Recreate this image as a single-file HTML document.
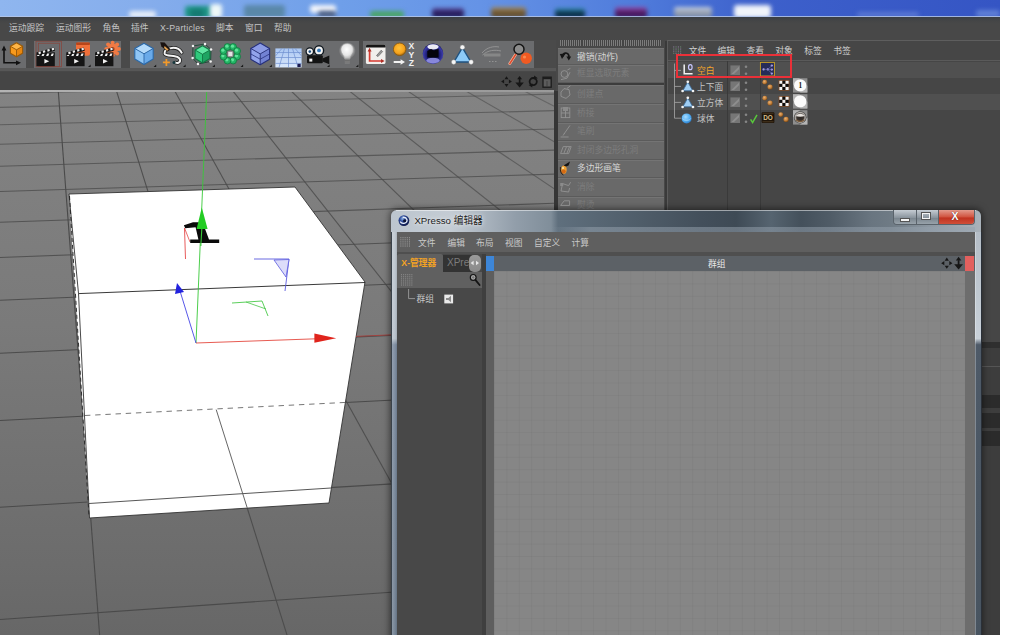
<!DOCTYPE html>
<html lang="zh"><head><meta charset="utf-8"><title>XPresso</title>
<style>
html,body{margin:0;padding:0;}
body{width:1009px;height:635px;overflow:hidden;background:#454545;position:relative;font-family:"Liberation Sans","Noto Sans CJK SC",sans-serif;font-size:8.75px;color:#c4c4c4;}
.a{position:absolute;}
.t{position:absolute;white-space:nowrap;line-height:12px;}
#top{left:0;top:0;width:1000px;height:17px;background:linear-gradient(90deg,#8fb6ef 0,#85adec 150px,#6f9fe9 340px,#6593e6 480px,#4f7bdb 640px,#3d60cb 760px,#3555c4 1000px);overflow:hidden;}
#top i{position:absolute;display:block;border-radius:3px;filter:blur(2.2px);}
#menubar{left:0;top:17px;width:1000px;height:24px;background:linear-gradient(#3a3e44 0,#454647 4px,#484848 7px);}
#white{left:1000px;top:0;width:9px;height:635px;background:#fff;}
#toolbar{left:0;top:40px;width:558px;height:30px;background:#4a4a4a;}
.bg{position:absolute;top:0.5px;height:27.5px;background:#6b6c6e;}
#strip{left:0;top:68px;width:558px;height:23px;background:linear-gradient(#575757 0,#575757 3px,#454545 3.6px);}
#vp{left:0;top:91px;width:554px;height:544px;overflow:hidden;background:linear-gradient(#838383 0,#7a7a7a 43%,#6c6c6c 87%,#676767 100%);}
</style></head><body>

<div id="top" class="a">
<i style="left:129px;top:11px;width:27px;height:7px;background:#e4ecf8"></i>
<i style="left:185px;top:6px;width:27px;height:12px;background:#1f9688"></i>
<i style="left:190px;top:9px;width:14px;height:9px;background:#157a72"></i>
<i style="left:210px;top:4px;width:12px;height:14px;background:#eef8f8"></i>
<i style="left:244px;top:5px;width:41px;height:13px;background:#5a88aa"></i>
<i style="left:310px;top:5px;width:26px;height:8px;background:#f4f6fb"></i>
<i style="left:318px;top:11px;width:18px;height:6px;background:#4a5c80"></i>
<i style="left:370px;top:11px;width:34px;height:7px;background:#4aa468"></i>
<i style="left:432px;top:8px;width:32px;height:10px;background:linear-gradient(#5a4a9a 0,#231a5a 55%)"></i>
<i style="left:491px;top:7px;width:35px;height:11px;background:linear-gradient(#a8916a 0,#66502f 55%)"></i>
<i style="left:555px;top:8px;width:30px;height:10px;background:linear-gradient(#3a94bc 0,#082c44 55%)"></i>
<i style="left:615px;top:7px;width:32px;height:11px;background:linear-gradient(#9a54b4 0,#45165c 55%)"></i>
<i style="left:674px;top:7px;width:38px;height:11px;background:linear-gradient(#d4dce8 0,#8a96aa 55%)"></i>
<i style="left:734px;top:5px;width:37px;height:13px;background:#f0f4fa"></i>
<i style="left:857px;top:12px;width:62px;height:5px;background:#5a78d4"></i>
<i style="left:976px;top:10px;width:24px;height:7px;background:#5f7fd6"></i>
</div><div class="a" style="left:0;top:15.5px;width:1000px;height:1.5px;background:#b4c6e6;opacity:.85"></div>
<div id="menubar" class="a"></div>
<div class="t" style="left:9px;top:21.5px;">运动跟踪</div>
<div class="t" style="left:56px;top:21.5px;">运动图形</div>
<div class="t" style="left:102.5px;top:21.5px;">角色</div>
<div class="t" style="left:131px;top:21.5px;">插件</div>
<div class="t" style="left:160px;top:21.5px;letter-spacing:0.24px;">X-Particles</div>
<div class="t" style="left:216px;top:21.5px;">脚本</div>
<div class="t" style="left:245px;top:21.5px;">窗口</div>
<div class="t" style="left:274px;top:21.5px;">帮助</div>
<div id="toolbar" class="a">
<div class="bg" style="left:0px;width:25.5px"></div>
<div class="bg" style="left:34px;width:86.5px"></div>
<div class="bg" style="left:129.5px;width:229.5px"></div>
<div class="bg" style="left:362.5px;width:171.5px"></div>
</div><div id="strip" class="a"></div>

<div id="vp" class="a"><svg width="560" height="544" style="position:absolute;left:0;top:0" stroke="#4a4a4a" stroke-width="1.1" fill="none">
<line x1="0" y1="2.5" x2="560" y2="-10.2" stroke-opacity="0.55"/>
<line x1="0" y1="16.4" x2="560" y2="3.0" stroke-opacity="0.60"/>
<line x1="0" y1="33.8" x2="560" y2="19.5" stroke-opacity="0.64"/>
<line x1="0" y1="53.2" x2="560" y2="37.9" stroke-opacity="0.69"/>
<line x1="0" y1="75.3" x2="560" y2="58.9" stroke-opacity="0.73"/>
<line x1="0" y1="100.5" x2="560" y2="82.9" stroke-opacity="0.78"/>
<line x1="0" y1="131.3" x2="560" y2="112.1" stroke-opacity="0.82"/>
<line x1="0" y1="166.5" x2="560" y2="145.6" stroke-opacity="0.86"/>
<line x1="0" y1="209.3" x2="560" y2="186.2" stroke-opacity="0.91"/>
<line x1="0" y1="262.3" x2="560" y2="236.6" stroke-opacity="0.96"/>
<line x1="0" y1="329.5" x2="560" y2="300.4" stroke-opacity="1.00"/>
<line x1="0" y1="416.3" x2="560" y2="382.9" stroke-opacity="1.00"/>
<line x1="0" y1="528.5" x2="560" y2="489.5" stroke-opacity="1.00"/>
<line x1="58.3" y1="0.3" x2="100.0" y2="549.0" stroke-opacity="1.00"/>
<line x1="116.6" y1="0.3" x2="288.6" y2="549.0" stroke-opacity="0.94"/>
<line x1="174.9" y1="0.3" x2="478.3" y2="549.0" stroke-opacity="0.88"/>
<line x1="233.2" y1="0.3" x2="666.7" y2="549.0" stroke-opacity="0.82"/>
<line x1="291.5" y1="0.3" x2="856.7" y2="549.0" stroke-opacity="0.76"/>
<line x1="349.8" y1="0.3" x2="1043.9" y2="549.0" stroke-opacity="0.70"/>
<line x1="408.1" y1="0.3" x2="1231.2" y2="549.0" stroke-opacity="0.64"/>
<line x1="466.4" y1="0.3" x2="1421.1" y2="549.0" stroke-opacity="0.58"/>
<line x1="524.7" y1="0.3" x2="1611.1" y2="549.0" stroke-opacity="0.52"/>
<line x1="583.0" y1="0.3" x2="1801.1" y2="549.0" stroke-opacity="0.50"/>
</svg></div>
<div class="a" style="left:0;top:90.4px;width:554px;height:2px;background:linear-gradient(90deg,#b4b4b4,#a2a2a2 40%,#9a9a9a)"></div>
<svg class="a" style="left:0;top:91px" width="554" height="544" viewBox="0 91 554 544">
<polygon points="69,194 295,187 365,282 329,503 89.5,518" fill="#ffffff"/>
<g stroke="#222" stroke-width="0.9" fill="none">
<polyline points="69,194 295,187 365,282 329,503 89.5,518 78.5,293.5 69,194" stroke="#333"/>
<line x1="78.5" y1="293.6" x2="365" y2="282.5"/>
<line x1="85" y1="415.5" x2="346" y2="402.4" stroke-dasharray="5.4,4.8" stroke="#666"/>
<line x1="89" y1="503.5" x2="331" y2="488" stroke="#444"/>
<line x1="69.5" y1="196" x2="89" y2="516" stroke-dasharray="4,3"/>
<line x1="216.2" y1="409.6" x2="247.2" y2="507.8" stroke="#555"/>
</g>
<line x1="206.7" y1="92" x2="196" y2="343" stroke="#38c838" stroke-width="0.9"/>
<line x1="196" y1="343" x2="316" y2="338.8" stroke="#e4483e" stroke-width="0.9"/>
<polygon points="336.2,338.2 314.4,333.6 314.4,342.8" fill="#e0241c"/>
<line x1="356" y1="336.4" x2="392" y2="334.8" stroke="#a8403c" stroke-width="0.9"/>
<line x1="196" y1="343" x2="180" y2="291" stroke="#4444e4" stroke-width="0.9"/>
<polygon points="177,283 175,294 184,292" fill="#2222de"/>
<polyline points="254,259 289,259 285,291" stroke="#5a5ade" fill="none" stroke-width="0.9"/><polygon points="274,260 289,259.5 286,277" fill="#dcdcfa" stroke="#5a5ade" stroke-width="0.8"/>
<polyline points="232,303 262,301 268,316" stroke="#48c848" fill="none" stroke-width="0.9"/><line x1="246" y1="302" x2="266" y2="309" stroke="#48c848" stroke-width="0.8"/>
<polyline points="184.5,228 185.5,259" stroke="#e44848" fill="none" stroke-width="0.9"/><line x1="184.5" y1="228" x2="190" y2="242" stroke="#e44848" stroke-width="0.8"/>
<path d="M183.9,225.2 L193,222.2 L202.6,222.2 L209,239.6 L219.2,239.6 L219.2,243 L190.2,243 L190.2,239.6 L198.4,239.6 L195.6,227.2 L185.2,228.2 Z" fill="#0a0a0a"/>
<polygon points="201.8,207.5 196.6,229 207.6,229" fill="#24cc24"/>
<line x1="201.8" y1="229" x2="200.8" y2="246" stroke="#38c838" stroke-width="1.1"/>
</svg>
<div class="a" style="left:556px;top:40px;width:111px;height:170px;background:#484848"></div><div class="a" style="left:554.4px;top:91px;width:3.4px;height:120px;background:#363636"></div><div class="a" style="left:664.8px;top:41px;width:2.2px;height:170px;background:#3a3a3a"></div>
<div class="a" style="left:559.5px;top:40.3px;width:102.5px;height:5.4px;background:repeating-linear-gradient(90deg,#7c7c7c 0,#7c7c7c 1px,#444 1px,#444 2.05px)"></div>
<div class="a" style="left:557.9px;top:83px;width:106.6px;height:2.4px;background:#3c3c3c"></div>
<div class="a" style="left:557.9px;top:48px;width:106.6px;height:16.8px;background:#696969;box-shadow:inset 0 1px 0 #747474, inset 0 -1px 0 #5b5b5b"><span class="t" style="left:19.1px;top:2.5px;color:#d6d6d6">撤销(动作)</span></div>
<div class="a" style="left:557.9px;top:64.8px;width:106.6px;height:18.2px;background:#696969;box-shadow:inset 0 1px 0 #747474, inset 0 -1px 0 #5b5b5b"><span class="t" style="left:19.1px;top:2.5px;color:#7d7d7d">框显选取元素</span></div>
<div class="a" style="left:557.9px;top:85.4px;width:106.6px;height:18.6px;background:#696969;box-shadow:inset 0 1px 0 #747474, inset 0 -1px 0 #5b5b5b"><span class="t" style="left:19.1px;top:2.5px;color:#7d7d7d">创建点</span></div>
<div class="a" style="left:557.9px;top:104px;width:106.6px;height:18.5px;background:#696969;box-shadow:inset 0 1px 0 #747474, inset 0 -1px 0 #5b5b5b"><span class="t" style="left:19.1px;top:2.5px;color:#7d7d7d">桥接</span></div>
<div class="a" style="left:557.9px;top:122.5px;width:106.6px;height:18.5px;background:#696969;box-shadow:inset 0 1px 0 #747474, inset 0 -1px 0 #5b5b5b"><span class="t" style="left:19.1px;top:2.5px;color:#7d7d7d">笔刷</span></div>
<div class="a" style="left:557.9px;top:141px;width:106.6px;height:18.5px;background:#696969;box-shadow:inset 0 1px 0 #747474, inset 0 -1px 0 #5b5b5b"><span class="t" style="left:19.1px;top:2.5px;color:#7d7d7d">封闭多边形孔洞</span></div>
<div class="a" style="left:557.9px;top:159.5px;width:106.6px;height:18.5px;background:#696969;box-shadow:inset 0 1px 0 #747474, inset 0 -1px 0 #5b5b5b"><span class="t" style="left:19.1px;top:2.5px;color:#d6d6d6">多边形画笔</span></div>
<div class="a" style="left:557.9px;top:178px;width:106.6px;height:18.5px;background:#696969;box-shadow:inset 0 1px 0 #747474, inset 0 -1px 0 #5b5b5b"><span class="t" style="left:19.1px;top:2.5px;color:#7d7d7d">消除</span></div>
<div class="a" style="left:557.9px;top:196.5px;width:106.6px;height:18.5px;background:#696969;box-shadow:inset 0 1px 0 #747474, inset 0 -1px 0 #5b5b5b"><span class="t" style="left:19.1px;top:2.5px;color:#7d7d7d">熨烫</span></div>
<div class="a" style="left:667px;top:40px;width:333px;height:600px;background:#464646;border-left:1px solid #5c5c5c;border-top:1px solid #5e5e5e"></div>
<div class="t" style="left:688.8px;top:44.5px;color:#cfcfcf">文件</div>
<div class="t" style="left:717.5px;top:44.5px;color:#cfcfcf">编辑</div>
<div class="t" style="left:746.5px;top:44.5px;color:#cfcfcf">查看</div>
<div class="t" style="left:775.3px;top:44.5px;color:#cfcfcf">对象</div>
<div class="t" style="left:804.2px;top:44.5px;color:#cfcfcf">标签</div>
<div class="t" style="left:833.2px;top:44.5px;color:#cfcfcf">书签</div>
<div class="a" style="left:668px;top:61.5px;width:332px;height:16px;background:#505050"></div><div class="a" style="left:668px;top:60px;width:332px;height:1px;background:#5a5a5a"></div>
<div class="a" style="left:668px;top:94px;width:332px;height:15.5px;background:#505050"></div>
<div class="a" style="left:727px;top:61px;width:1px;height:150px;background:#3a3a3a"></div>
<div class="a" style="left:759.5px;top:61px;width:1px;height:150px;background:#3a3a3a"></div>
<div class="t" style="left:697px;top:64.5px;color:#f2a52a">空白</div>
<div class="t" style="left:697px;top:80.5px;color:#c4c4c4">上下面</div>
<div class="t" style="left:697px;top:96.5px;color:#c4c4c4">立方体</div>
<div class="t" style="left:697px;top:112.5px;color:#c4c4c4">球体</div>
<div class="a" style="left:668px;top:347px;width:332px;height:300px;background:#3d3d3d"></div>
<div class="a" style="left:668px;top:342px;width:332px;height:5.5px;background:#2f2f2f"></div>
<div class="a" style="left:668px;top:366px;width:332px;height:1px;background:#555"></div>
<div class="a" style="left:668px;top:395px;width:332px;height:13px;background:#2b2b2b"></div>
<div class="a" style="left:668px;top:413px;width:332px;height:15px;background:#2b2b2b"></div>
<div class="a" style="left:668px;top:431px;width:332px;height:15px;background:#2b2b2b"></div>
<div class="a" style="left:391px;top:209.5px;width:589.5px;height:430px;border-radius:6px 6px 0 0;box-shadow:0 0 7px 1px rgba(0,0,0,.55);background:linear-gradient(90deg,#bcc5ce 0,#c4ccd4 60px,#929eaa 124px,#808e9a 160px,#5f6f7d 167px,#4f5d69 250px,#434f5b 310px,#3e4a55 345px,#566470 380px,#44505b 410px,#505c67 440px,#697580 480px,#6f7b85 500px,#8e99a3 540px,#a9b2ba 589px);"></div>
<div class="a" style="left:396px;top:210px;width:580px;height:1px;background:rgba(255,255,255,.5)"></div>
<div class="a" style="left:550px;top:227px;width:425px;height:5px;background:linear-gradient(90deg,rgba(150,162,174,0),rgba(150,162,174,.5) 40px)"></div>
<div class="a" style="left:391px;top:232px;width:6px;height:410px;background:linear-gradient(90deg,rgba(255,255,255,.22),rgba(255,255,255,.08) 50%,rgba(0,0,0,.15)),linear-gradient(#bcc5ce 0,#b4bec8 26%,#75859a 27.5%,#6a7a8c 100%);border-left:1px solid #3a424a"></div>
<div class="a" style="left:974.5px;top:232px;width:6px;height:410px;background:linear-gradient(90deg,rgba(255,255,255,.3) 0,rgba(255,255,255,.3) 1px,rgba(255,255,255,0) 1.5px),linear-gradient(#b4bdc6 0,#c9d1d9 26%,#4e5a68 27.5%,#485460 100%);border-right:1px solid #2a3038"></div>
<div class="t" style="left:414.4px;top:214.6px;font-size:9.7px;color:#1c1c1c;text-shadow:0 0 5px rgba(255,255,255,.85),0 0 2px rgba(255,255,255,.5)">XPresso 编辑器</div>
<div class="a" style="left:892.5px;top:210px;width:82px;height:14.5px;border-radius:0 0 4px 4px;overflow:hidden;border:1px solid #5a636b;border-top:none;box-sizing:border-box"><div class="a" style="left:0;top:0;width:22.5px;height:15px;background:linear-gradient(#c5ccd3,#8b959e 50%,#78838c 52%,#9da7af)"></div><div class="a" style="left:22.5px;top:0;width:21px;height:15px;background:linear-gradient(#c5ccd3,#8b959e 50%,#78838c 52%,#9da7af);border-left:1px solid #5a636b"></div><div class="a" style="left:44px;top:0;width:38px;height:15px;background:linear-gradient(#e39a8c,#d0513d 48%,#c03220 52%,#d2533c);border-left:1px solid #5a636b"></div></div>
<div class="a" style="left:899.5px;top:217.5px;width:8px;height:2.5px;background:#f4f4f4;border:0.5px solid #555"></div>
<div class="a" style="left:921.5px;top:213px;width:8px;height:6px;border:1.5px solid #f4f4f4;box-sizing:border-box;outline:0.5px solid #555"></div>
<div class="t" style="left:951.5px;top:209.5px;font-size:10.5px;font-weight:bold;color:#fff;text-shadow:0 0 1px #400">X</div>
<div class="a" style="left:397px;top:232px;width:577.5px;height:410px;background:#868686"></div>
<div class="a" style="left:397px;top:232px;width:577.5px;height:19.5px;background:#5f5f5f"></div>
<div class="a" style="left:397px;top:251.5px;width:577.5px;height:4px;background:#4f4f4f"></div>
<div class="t" style="left:418px;top:236.5px;color:#c9c9c9">文件</div>
<div class="t" style="left:447.5px;top:236.5px;color:#c9c9c9">编辑</div>
<div class="t" style="left:476px;top:236.5px;color:#c9c9c9">布局</div>
<div class="t" style="left:505px;top:236.5px;color:#c9c9c9">视图</div>
<div class="t" style="left:534px;top:236.5px;color:#c9c9c9">自定义</div>
<div class="t" style="left:571.5px;top:236.5px;color:#c9c9c9">计算</div>
<div class="a" style="left:397px;top:254px;width:85px;height:390px;background:#484848"></div>
<div class="a" style="left:397px;top:254px;width:45.5px;height:18px;background:#606060;border-radius:2px 2px 0 0"></div>
<div class="a" style="left:443px;top:255px;width:30px;height:17px;background:#333"></div>
<div class="t" style="left:401.3px;top:257px;color:#f3a324;font-weight:bold">X-管理器</div>
<div class="t" style="left:447px;top:257px;color:#7b7b7b;font-size:10px">XPre</div>
<div class="a" style="left:468.5px;top:254.5px;width:12.5px;height:17px;border-radius:5px;background:linear-gradient(#9a9a9a,#8a8a8a)"></div>
<div class="a" style="left:397px;top:272px;width:85px;height:15.5px;background:#606060"></div>
<div class="t" style="left:416.5px;top:293px;color:#c6c6c6">群组</div>
<div class="a" style="left:482px;top:254px;width:4px;height:390px;background:#3f3f3f"></div>
<div class="a" style="left:486px;top:255.5px;width:488.5px;height:15.5px;background:#5c6166"></div>
<div class="a" style="left:486px;top:255.5px;width:8px;height:15.5px;background:#3d86d8"></div>
<div class="a" style="left:486px;top:271px;width:8px;height:380px;background:#5e5e5e"></div>
<div class="a" style="left:965px;top:256px;width:9px;height:15px;background:#e2605e"></div>
<div class="a" style="left:965px;top:271px;width:9.5px;height:380px;background:#6d6d6d"></div>
<div class="t" style="left:708px;top:257.5px;color:#e8e8e8">群组</div>
<div class="a" style="left:494px;top:271px;width:471px;height:370px;background-color:#868686;background-image:linear-gradient(90deg,rgba(0,0,0,.035) 1px,transparent 1px),linear-gradient(rgba(0,0,0,.035) 1px,transparent 1px);background-size:12.4px 12.4px"></div>
<svg class="a" style="left:556px;top:40px" width="112" height="170" viewBox="556 40 112 170"><path d="M562.5,56.6 C562.8,52.6 567.5,51.6 568.8,55.4 L568.9,58.8" fill="none" stroke="#141414" stroke-width="1.7"/><polygon points="559.8,54 565.6,53.6 562,58.9" fill="#141414"/><polygon points="566.4,56.6 571.2,56.6 568.8,60.4" fill="#141414"/><g fill="none" stroke="#939393" stroke-width="0.9"><circle cx="564.4" cy="74" r="3.4"/><path d="M567.4,70 l3,-1.6 M561,79.6 l6,-1.4 l3,-6"/></g><g fill="none" stroke="#939393" stroke-width="0.9"><path d="M561,92 l3,-3.4 l5,1 l1,5.4 l-4,3.4 l-5,-2 z"/><path d="M567,88.4 l3.4,-2.6"/></g><g fill="none" stroke="#939393" stroke-width="0.9"><rect x="561.2" y="108" width="8.6" height="9.6"/><path d="M561.2,113 h8.6 M565.5,108 v9.6"/><rect x="563" y="107" width="5" height="4" fill="#8b8b8b" stroke="none"/></g><g fill="none" stroke="#939393" stroke-width="0.9"><path d="M570,125.4 l-6,8.6"/><path d="M560.6,137 h8"/><path d="M563,135.6 l1.6,-2.4"/></g><g fill="none" stroke="#939393" stroke-width="0.9"><path d="M560.6,153.6 l2.6,-7 h8 l-2.6,7 z"/><path d="M564,153 l2.4,-6 M567,153 l2.4,-6"/></g><ellipse cx="564" cy="169.6" rx="2.7" ry="4.2" fill="#f0a032"/><ellipse cx="563.6" cy="171.6" rx="2.2" ry="2" fill="#d46a14"/><circle cx="563" cy="168" r="1.1" fill="#fbe3a8"/><polygon points="563.6,165.6 570,161.6 568.6,165.4 566,166.6" fill="#141414"/><path d="M560.4,167 C560,171 561,174 563.4,175" stroke="#2a1a0a" stroke-width="0.9" fill="none"/><g fill="none" stroke="#939393" stroke-width="0.9"><path d="M561,191 l1.6,-7.4 l6,2 l2,-3.4"/><path d="M561,191 l7.6,1 l1,-4"/><rect x="560.2" y="183" width="3" height="3" fill="#8b8b8b" stroke="none"/></g><g fill="none" stroke="#939393" stroke-width="0.9"><path d="M560.6,205.4 h9 v-4.6 h-5.4 z"/></g></svg>
<svg class="a" style="left:668px;top:40px" width="332" height="100" viewBox="668 40 332 100"><defs><radialGradient id="gBall" cx="40%" cy="35%" r="65%"><stop offset="0" stop-color="#e8b070"/><stop offset="0.6" stop-color="#c4803a"/><stop offset="1" stop-color="#7a4a18"/></radialGradient>
<radialGradient id="gSp" cx="40%" cy="35%" r="70%"><stop offset="0" stop-color="#a8dcff"/><stop offset="0.6" stop-color="#52aef2"/><stop offset="1" stop-color="#2a7ac8"/></radialGradient>
<radialGradient id="gChrome" cx="50%" cy="50%" r="50%"><stop offset="0" stop-color="#2a2420"/><stop offset="0.55" stop-color="#3a3430"/><stop offset="0.8" stop-color="#b8b4b0"/><stop offset="1" stop-color="#30302e"/></radialGradient></defs><rect x="673.2" y="46.4" width="1.1" height="1.1" fill="#8a7a9a"/><rect x="673.2" y="48.5" width="1.1" height="1.1" fill="#6a8a72"/><rect x="673.2" y="50.6" width="1.1" height="1.1" fill="#8a7a9a"/><rect x="673.2" y="52.7" width="1.1" height="1.1" fill="#6a8a72"/><rect x="675.5" y="46.4" width="1.1" height="1.1" fill="#6a8a72"/><rect x="675.5" y="48.5" width="1.1" height="1.1" fill="#8a7a9a"/><rect x="675.5" y="50.6" width="1.1" height="1.1" fill="#6a8a72"/><rect x="675.5" y="52.7" width="1.1" height="1.1" fill="#8a7a9a"/><rect x="677.8" y="46.4" width="1.1" height="1.1" fill="#8a7a9a"/><rect x="677.8" y="48.5" width="1.1" height="1.1" fill="#6a8a72"/><rect x="677.8" y="50.6" width="1.1" height="1.1" fill="#8a7a9a"/><rect x="677.8" y="52.7" width="1.1" height="1.1" fill="#6a8a72"/><rect x="680.1" y="46.4" width="1.1" height="1.1" fill="#6a8a72"/><rect x="680.1" y="48.5" width="1.1" height="1.1" fill="#8a7a9a"/><rect x="680.1" y="50.6" width="1.1" height="1.1" fill="#6a8a72"/><rect x="680.1" y="52.7" width="1.1" height="1.1" fill="#8a7a9a"/><g stroke="#a8a8a8" stroke-width="0.8" fill="none"><path d="M674.5,63.5 V118.2 M674.5,70.4 h6.5 M674.5,86.4 h6.5 M674.5,102.4 h6.5 M674.5,118.2 h6.5"/></g><polyline points="684.2,64.6 684.2,73.8 692.6,73.8" fill="none" stroke="#f2f2f2" stroke-width="1.5"/><ellipse cx="690.3" cy="67.2" rx="1.8" ry="2.5" fill="none" stroke="#c8c8ff" stroke-width="1.2"/><polygon points="687.8,82.0 682.8,90.8 692.8,90.8" fill="#9fcdf2" stroke="#3a6a98" stroke-width="0.8" stroke-linejoin="round"/><circle cx="687.8" cy="81.8" r="1.35" fill="#f4f4f4"/><circle cx="682.6" cy="91.0" r="1.35" fill="#f4f4f4"/><circle cx="693" cy="91.0" r="1.35" fill="#f4f4f4"/><polygon points="687.8,98.0 682.8,106.8 692.8,106.8" fill="#9fcdf2" stroke="#3a6a98" stroke-width="0.8" stroke-linejoin="round"/><circle cx="687.8" cy="97.8" r="1.35" fill="#f4f4f4"/><circle cx="682.6" cy="107.0" r="1.35" fill="#f4f4f4"/><circle cx="693" cy="107.0" r="1.35" fill="#f4f4f4"/><circle cx="686.6" cy="118.4" r="5" fill="url(#gSp)"/><path d="M682.6,118.4 a4,2 0 0 0 8,0" fill="none" stroke="#d8f0ff" stroke-width="0.6" opacity="0.8"/><rect x="730.4" y="65.4" width="9.6" height="9.6" fill="#767676"/><polygon points="731.4,74.0 739,66.4 739,69.2 734,74.0" fill="#8e8e8e"/><circle cx="746" cy="66.8" r="1.3" fill="#868686"/><circle cx="746" cy="73.8" r="1.3" fill="#868686"/><rect x="730.4" y="81.4" width="9.6" height="9.6" fill="#767676"/><polygon points="731.4,90.0 739,82.4 739,85.2 734,90.0" fill="#8e8e8e"/><circle cx="746" cy="82.8" r="1.3" fill="#868686"/><circle cx="746" cy="89.8" r="1.3" fill="#868686"/><rect x="730.4" y="97.4" width="9.6" height="9.6" fill="#767676"/><polygon points="731.4,106.0 739,98.4 739,101.2 734,106.0" fill="#8e8e8e"/><circle cx="746" cy="98.8" r="1.3" fill="#868686"/><circle cx="746" cy="105.8" r="1.3" fill="#868686"/><rect x="730.4" y="113.4" width="9.6" height="9.6" fill="#767676"/><polygon points="731.4,122.0 739,114.4 739,117.2 734,122.0" fill="#8e8e8e"/><circle cx="746" cy="114.8" r="1.3" fill="#868686"/><circle cx="746" cy="121.8" r="1.3" fill="#868686"/><polyline points="750.6,119.4 752.6,122.6 757,114.8" fill="none" stroke="#58c83c" stroke-width="1.5"/><rect x="760.4" y="62.4" width="14" height="13.6" fill="#262c58" stroke="#c9a224" stroke-width="0.9"/><circle cx="763.6" cy="69.4" r="1.15" fill="#b6a8ec"/><circle cx="767.8" cy="69.4" r="1.15" fill="#b6a8ec"/><circle cx="771.8" cy="65.6" r="1.15" fill="#b6a8ec"/><circle cx="771.8" cy="69.6" r="1.15" fill="#b6a8ec"/><circle cx="771.8" cy="73.6" r="1.15" fill="#b6a8ec"/><path d="M763.6,69.4 h4.2 l4,-3.8 M767.8,69.4 h4 M767.8,69.4 l4,4.2" stroke="#6a70b8" stroke-width="0.6" fill="none"/><circle cx="764.8" cy="82.2" r="2.4" fill="url(#gBall)"/><circle cx="770.0999999999999" cy="87.0" r="2.6" fill="url(#gBall)"/><circle cx="764.8" cy="98.2" r="2.4" fill="url(#gBall)"/><circle cx="770.0999999999999" cy="103.0" r="2.6" fill="url(#gBall)"/><circle cx="780.8" cy="114.6" r="2.4" fill="url(#gBall)"/><circle cx="786.0999999999999" cy="119.39999999999999" r="2.6" fill="url(#gBall)"/><rect x="778.6" y="80.0" width="10.8" height="10.8" fill="#7a4a28"/><rect x="779.40" y="80.80" width="3.07" height="3.07" fill="#f4f4f4"/><rect x="779.40" y="83.87" width="3.07" height="3.07" fill="#0c0c0c"/><rect x="779.40" y="86.94" width="3.07" height="3.07" fill="#f4f4f4"/><rect x="782.47" y="80.80" width="3.07" height="3.07" fill="#0c0c0c"/><rect x="782.47" y="83.87" width="3.07" height="3.07" fill="#f4f4f4"/><rect x="782.47" y="86.94" width="3.07" height="3.07" fill="#0c0c0c"/><rect x="785.54" y="80.80" width="3.07" height="3.07" fill="#f4f4f4"/><rect x="785.54" y="83.87" width="3.07" height="3.07" fill="#0c0c0c"/><rect x="785.54" y="86.94" width="3.07" height="3.07" fill="#f4f4f4"/><rect x="778.6" y="96.0" width="10.8" height="10.8" fill="#7a4a28"/><rect x="779.40" y="96.80" width="3.07" height="3.07" fill="#f4f4f4"/><rect x="779.40" y="99.87" width="3.07" height="3.07" fill="#0c0c0c"/><rect x="779.40" y="102.94" width="3.07" height="3.07" fill="#f4f4f4"/><rect x="782.47" y="96.80" width="3.07" height="3.07" fill="#0c0c0c"/><rect x="782.47" y="99.87" width="3.07" height="3.07" fill="#f4f4f4"/><rect x="782.47" y="102.94" width="3.07" height="3.07" fill="#0c0c0c"/><rect x="785.54" y="96.80" width="3.07" height="3.07" fill="#f4f4f4"/><rect x="785.54" y="99.87" width="3.07" height="3.07" fill="#0c0c0c"/><rect x="785.54" y="102.94" width="3.07" height="3.07" fill="#f4f4f4"/><rect x="793" y="78.2" width="14.4" height="14.4" fill="#8e8e8e"/><polygon points="793,78.2 800,78.2 793,85.4" fill="#b4b4b4"/><polygon points="807.4,92.60000000000001 800,92.60000000000001 807.4,85.4" fill="#b4b4b4"/><circle cx="800.2" cy="85.4" r="6.2" fill="#fbfbfb"/><text x="800.3" y="88.0" font-family="Liberation Serif,serif" font-weight="bold" font-size="7.4" fill="#151515" text-anchor="middle">1</text><rect x="793" y="94.2" width="14.4" height="14.4" fill="#8e8e8e"/><polygon points="793,94.2 800,94.2 793,101.4" fill="#b4b4b4"/><polygon points="807.4,108.60000000000001 800,108.60000000000001 807.4,101.4" fill="#b4b4b4"/><circle cx="800.2" cy="101.4" r="6.2" fill="#fbfbfb"/><rect x="793" y="110.2" width="14.4" height="14.4" fill="#8e8e8e"/><polygon points="793,110.2 800,110.2 793,117.4" fill="#b4b4b4"/><polygon points="807.4,124.60000000000001 800,124.60000000000001 807.4,117.4" fill="#b4b4b4"/><circle cx="800.2" cy="117.4" r="6.2" fill="url(#gChrome)"/><path d="M795.6,116.0 q4.6,-4.6 9.2,0 q-4.6,1.6 -9.2,0 z" fill="#e8e4e0"/><path d="M796,119.80000000000001 q4.2,3.4 8.4,0" stroke="#7a5a3a" stroke-width="1.4" fill="none"/><rect x="761.6" y="112.2" width="12.8" height="10.8" rx="1" fill="#1e140a"/><rect x="762.4" y="112.8" width="11.2" height="1.4" fill="#3c2c18"/><rect x="762.4" y="121" width="11.2" height="1.4" fill="#3c2c18"/><text x="768" y="120.4" font-family="Liberation Sans,sans-serif" font-weight="bold" font-size="6.4" fill="#d8c090" text-anchor="middle">DO</text></svg>
<svg class="a" style="left:391px;top:209px" width="590" height="100" viewBox="391 209 590 100"><defs><radialGradient id="gC4" cx="38%" cy="32%" r="75%"><stop offset="0" stop-color="#8fb4e8"/><stop offset="0.35" stop-color="#2c4a9a"/><stop offset="1" stop-color="#0c1440"/></radialGradient></defs><circle cx="403.9" cy="220.6" r="5.4" fill="url(#gC4)"/><path d="M400.2,221.6 a3.6,3 0 1 0 2.4,-4.2" fill="none" stroke="#e8eef8" stroke-width="1.3"/><circle cx="404.6" cy="220.8" r="1.5" fill="#0a1030"/><rect x="400.30" y="237.20" width="1.08" height="1.04" fill="#9a9a9a"/><rect x="400.30" y="239.28" width="1.08" height="1.04" fill="#9a9a9a"/><rect x="400.30" y="241.36" width="1.08" height="1.04" fill="#9a9a9a"/><rect x="400.30" y="243.44" width="1.08" height="1.04" fill="#9a9a9a"/><rect x="400.30" y="245.52" width="1.08" height="1.04" fill="#9a9a9a"/><rect x="402.46" y="237.20" width="1.08" height="1.04" fill="#9a9a9a"/><rect x="402.46" y="239.28" width="1.08" height="1.04" fill="#9a9a9a"/><rect x="402.46" y="241.36" width="1.08" height="1.04" fill="#9a9a9a"/><rect x="402.46" y="243.44" width="1.08" height="1.04" fill="#9a9a9a"/><rect x="402.46" y="245.52" width="1.08" height="1.04" fill="#9a9a9a"/><rect x="404.62" y="237.20" width="1.08" height="1.04" fill="#9a9a9a"/><rect x="404.62" y="239.28" width="1.08" height="1.04" fill="#9a9a9a"/><rect x="404.62" y="241.36" width="1.08" height="1.04" fill="#9a9a9a"/><rect x="404.62" y="243.44" width="1.08" height="1.04" fill="#9a9a9a"/><rect x="404.62" y="245.52" width="1.08" height="1.04" fill="#9a9a9a"/><rect x="406.78" y="237.20" width="1.08" height="1.04" fill="#9a9a9a"/><rect x="406.78" y="239.28" width="1.08" height="1.04" fill="#9a9a9a"/><rect x="406.78" y="241.36" width="1.08" height="1.04" fill="#9a9a9a"/><rect x="406.78" y="243.44" width="1.08" height="1.04" fill="#9a9a9a"/><rect x="406.78" y="245.52" width="1.08" height="1.04" fill="#9a9a9a"/><rect x="408.94" y="237.20" width="1.08" height="1.04" fill="#9a9a9a"/><rect x="408.94" y="239.28" width="1.08" height="1.04" fill="#9a9a9a"/><rect x="408.94" y="241.36" width="1.08" height="1.04" fill="#9a9a9a"/><rect x="408.94" y="243.44" width="1.08" height="1.04" fill="#9a9a9a"/><rect x="408.94" y="245.52" width="1.08" height="1.04" fill="#9a9a9a"/><rect x="401.00" y="274.20" width="1.03" height="1.03" fill="#8e8e8e"/><rect x="401.00" y="276.27" width="1.03" height="1.03" fill="#8e8e8e"/><rect x="401.00" y="278.33" width="1.03" height="1.03" fill="#8e8e8e"/><rect x="401.00" y="280.40" width="1.03" height="1.03" fill="#8e8e8e"/><rect x="401.00" y="282.47" width="1.03" height="1.03" fill="#8e8e8e"/><rect x="401.00" y="284.53" width="1.03" height="1.03" fill="#8e8e8e"/><rect x="403.07" y="274.20" width="1.03" height="1.03" fill="#8e8e8e"/><rect x="403.07" y="276.27" width="1.03" height="1.03" fill="#8e8e8e"/><rect x="403.07" y="278.33" width="1.03" height="1.03" fill="#8e8e8e"/><rect x="403.07" y="280.40" width="1.03" height="1.03" fill="#8e8e8e"/><rect x="403.07" y="282.47" width="1.03" height="1.03" fill="#8e8e8e"/><rect x="403.07" y="284.53" width="1.03" height="1.03" fill="#8e8e8e"/><rect x="405.13" y="274.20" width="1.03" height="1.03" fill="#8e8e8e"/><rect x="405.13" y="276.27" width="1.03" height="1.03" fill="#8e8e8e"/><rect x="405.13" y="278.33" width="1.03" height="1.03" fill="#8e8e8e"/><rect x="405.13" y="280.40" width="1.03" height="1.03" fill="#8e8e8e"/><rect x="405.13" y="282.47" width="1.03" height="1.03" fill="#8e8e8e"/><rect x="405.13" y="284.53" width="1.03" height="1.03" fill="#8e8e8e"/><rect x="407.20" y="274.20" width="1.03" height="1.03" fill="#8e8e8e"/><rect x="407.20" y="276.27" width="1.03" height="1.03" fill="#8e8e8e"/><rect x="407.20" y="278.33" width="1.03" height="1.03" fill="#8e8e8e"/><rect x="407.20" y="280.40" width="1.03" height="1.03" fill="#8e8e8e"/><rect x="407.20" y="282.47" width="1.03" height="1.03" fill="#8e8e8e"/><rect x="407.20" y="284.53" width="1.03" height="1.03" fill="#8e8e8e"/><rect x="409.27" y="274.20" width="1.03" height="1.03" fill="#8e8e8e"/><rect x="409.27" y="276.27" width="1.03" height="1.03" fill="#8e8e8e"/><rect x="409.27" y="278.33" width="1.03" height="1.03" fill="#8e8e8e"/><rect x="409.27" y="280.40" width="1.03" height="1.03" fill="#8e8e8e"/><rect x="409.27" y="282.47" width="1.03" height="1.03" fill="#8e8e8e"/><rect x="409.27" y="284.53" width="1.03" height="1.03" fill="#8e8e8e"/><rect x="411.33" y="274.20" width="1.03" height="1.03" fill="#8e8e8e"/><rect x="411.33" y="276.27" width="1.03" height="1.03" fill="#8e8e8e"/><rect x="411.33" y="278.33" width="1.03" height="1.03" fill="#8e8e8e"/><rect x="411.33" y="280.40" width="1.03" height="1.03" fill="#8e8e8e"/><rect x="411.33" y="282.47" width="1.03" height="1.03" fill="#8e8e8e"/><rect x="411.33" y="284.53" width="1.03" height="1.03" fill="#8e8e8e"/><line x1="475.2" y1="279.6" x2="479.6" y2="285" stroke="#141414" stroke-width="1.8" stroke-linecap="round"/><circle cx="473.2" cy="277.4" r="2.9" fill="#7a7a7a" stroke="#141414" stroke-width="1.2"/><circle cx="473.2" cy="277.4" r="1.7" fill="none" stroke="#d8d8d8" stroke-width="0.5"/><path d="M408.6,289 V298.6 H415" fill="none" stroke="#a6a6a6" stroke-width="0.8"/><rect x="444.3" y="294.6" width="8.8" height="8.8" fill="#e9e9e9"/><polygon points="446,298 448.4,298 451,295.8 451,302.2 448.4,300 446,300" fill="#8a8a8a"/><polygon points="470.6,263 473.6,260.8 473.6,265.2" fill="#e6e6e6"/><polygon points="479,263 476,260.8 476,265.2" fill="#e6e6e6"/><g fill="#161616"><polygon points="946.8,257.59999999999997 944.6999999999999,260.7 948.9,260.7"/><polygon points="946.8,268.8 944.6999999999999,265.7 948.9,265.7"/><polygon points="941.1999999999999,263.2 944.3,261.09999999999997 944.3,265.3"/><polygon points="952.4,263.2 949.3,261.09999999999997 949.3,265.3"/><polygon points="958.6,256.8 955.8000000000001,260.59999999999997 961.4,260.59999999999997"/><rect x="957.7" y="260.2" width="1.8" height="5"/><polygon points="958.6,269.59999999999997 954.2,264.2 963.0,264.2"/></g></svg>
<svg class="a" style="left:0;top:38px" width="560" height="56" viewBox="0 38 560 56"><defs>
<radialGradient id="gBulb" cx="45%" cy="38%" r="65%"><stop offset="0" stop-color="#ffffff"/><stop offset="0.6" stop-color="#e6e6e6"/><stop offset="1" stop-color="#a8a8a8"/></radialGradient>
<radialGradient id="gGlow" cx="50%" cy="50%" r="50%"><stop offset="0.7" stop-color="#ffffff" stop-opacity="0.32"/><stop offset="1" stop-color="#ffffff" stop-opacity="0"/></radialGradient>
<radialGradient id="gOr" cx="45%" cy="40%" r="60%"><stop offset="0" stop-color="#ffc23a"/><stop offset="0.7" stop-color="#f5a21c"/><stop offset="1" stop-color="#a86a10"/></radialGradient>
<radialGradient id="gSph" cx="50%" cy="55%" r="55%"><stop offset="0" stop-color="#101040"/><stop offset="0.55" stop-color="#1c1c70"/><stop offset="0.85" stop-color="#3a3aa8"/><stop offset="1" stop-color="#1a1a60"/></radialGradient>
<linearGradient id="gFloor" x1="0" y1="0" x2="0" y2="1"><stop offset="0" stop-color="#a9c6f2"/><stop offset="1" stop-color="#dbe9fc"/></linearGradient>
</defs><g stroke="#111" stroke-width="1.6" fill="none"><polyline points="4,49 4,62.8 17,62.8"/></g><polygon points="4,45.5 1.6,50.5 6.4,50.5" fill="#111"/><polygon points="21,62.8 16,60.4 16,65.2" fill="#111"/><polygon points="16.5,42.8 22.6,46.3 16.5,49.8 10.4,46.3" fill="#ffb546"/><polygon points="10.4,46.3 16.5,49.8 16.5,56.8 10.4,53.3" fill="#f89a1c"/><polygon points="22.6,46.3 16.5,49.8 16.5,56.8 22.6,53.3" fill="#e8860e"/><polygon points="16.5,42.8 22.6,46.3 22.6,53.3 16.5,56.8 10.4,53.3 10.4,46.3" fill="none" stroke="#9a5a08" stroke-width="1.1" stroke-linejoin="round"/><polyline points="10.4,46.3 16.5,49.8 22.6,46.3" fill="none" stroke="#9a5a08" stroke-width="0.9"/><line x1="16.5" y1="49.8" x2="16.5" y2="56.8" stroke="#9a5a08" stroke-width="0.9"/><rect x="36" y="41.2" width="25.6" height="25.6" fill="none" stroke="#8a4238" stroke-width="0.7"/><rect x="38.3" y="43.2" width="21.2" height="23.4" fill="none" stroke="#8a4238" stroke-width="0.7"/><g transform="translate(36.4,0)"><rect x="0" y="56.2" width="18.4" height="10" fill="#151515"/><polygon points="0,53.6 18.4,52.2 18.4,56.4 0,56.4" fill="#111"/><polygon points="1.5,53.6 3.7,53.4 2.7,56 0.5,56" fill="#f0f0f0"/><polygon points="6.1,53.6 8.3,53.4 7.3,56 5.1,56" fill="#f0f0f0"/><polygon points="10.7,53.6 12.899999999999999,53.4 11.899999999999999,56 9.7,56" fill="#f0f0f0"/><polygon points="15.299999999999999,53.6 17.5,53.4 16.5,56 14.299999999999999,56" fill="#f0f0f0"/><polygon points="0,52.6 17.6,47.6 18.6,50.8 1,55.2" fill="#111"/><polygon points="2.0,52.0 4.2,51.4 4.6,53.6 2.4,54.2" fill="#f0f0f0"/><polygon points="6.4,50.75 8.600000000000001,50.15 9.0,52.35 6.800000000000001,52.95" fill="#f0f0f0"/><polygon points="10.8,49.5 13.0,48.9 13.4,51.1 11.200000000000001,51.7" fill="#f0f0f0"/><polygon points="15.200000000000001,48.25 17.400000000000002,47.65 17.8,49.85 15.600000000000001,50.45" fill="#f0f0f0"/><polygon points="8,59 12.8,61.3 8,63.6" fill="#f2f2f2"/></g><rect x="76" y="42.5" width="14" height="13.3" rx="2" fill="#f0703a"/><rect x="76" y="42.5" width="14" height="2.4" rx="1" fill="#b8451a"/><circle cx="81.5" cy="50.5" r="1.6" fill="#a3421f"/><g transform="translate(66.2,0)"><rect x="0" y="56.2" width="18.4" height="10" fill="#151515"/><polygon points="0,53.6 18.4,52.2 18.4,56.4 0,56.4" fill="#111"/><polygon points="1.5,53.6 3.7,53.4 2.7,56 0.5,56" fill="#f0f0f0"/><polygon points="6.1,53.6 8.3,53.4 7.3,56 5.1,56" fill="#f0f0f0"/><polygon points="10.7,53.6 12.899999999999999,53.4 11.899999999999999,56 9.7,56" fill="#f0f0f0"/><polygon points="15.299999999999999,53.6 17.5,53.4 16.5,56 14.299999999999999,56" fill="#f0f0f0"/><polygon points="0,52.6 17.6,47.6 18.6,50.8 1,55.2" fill="#111"/><polygon points="2.0,52.0 4.2,51.4 4.6,53.6 2.4,54.2" fill="#f0f0f0"/><polygon points="6.4,50.75 8.600000000000001,50.15 9.0,52.35 6.800000000000001,52.95" fill="#f0f0f0"/><polygon points="10.8,49.5 13.0,48.9 13.4,51.1 11.200000000000001,51.7" fill="#f0f0f0"/><polygon points="15.200000000000001,48.25 17.400000000000002,47.65 17.8,49.85 15.600000000000001,50.45" fill="#f0f0f0"/><polygon points="8,59 12.8,61.3 8,63.6" fill="#f2f2f2"/></g><polygon points="88,67 90.6,67 90.6,64.4" fill="#1a1a1a"/><circle cx="118.9" cy="49.0" r="2" fill="#f07a44"/><circle cx="117.1" cy="53.5" r="2" fill="#f07a44"/><circle cx="112.6" cy="55.3" r="2" fill="#f07a44"/><circle cx="108.1" cy="53.5" r="2" fill="#f07a44"/><circle cx="106.3" cy="49.0" r="2" fill="#f07a44"/><circle cx="108.1" cy="44.5" r="2" fill="#f07a44"/><circle cx="112.6" cy="42.7" r="2" fill="#f07a44"/><circle cx="117.1" cy="44.5" r="2" fill="#f07a44"/><circle cx="112.6" cy="49" r="5.6" fill="#f07a44"/><circle cx="112.6" cy="49" r="2.1" fill="#a8461e"/><g transform="translate(95,0)"><rect x="0" y="56.2" width="18.4" height="10" fill="#151515"/><polygon points="0,53.6 18.4,52.2 18.4,56.4 0,56.4" fill="#111"/><polygon points="1.5,53.6 3.7,53.4 2.7,56 0.5,56" fill="#f0f0f0"/><polygon points="6.1,53.6 8.3,53.4 7.3,56 5.1,56" fill="#f0f0f0"/><polygon points="10.7,53.6 12.899999999999999,53.4 11.899999999999999,56 9.7,56" fill="#f0f0f0"/><polygon points="15.299999999999999,53.6 17.5,53.4 16.5,56 14.299999999999999,56" fill="#f0f0f0"/><polygon points="0,52.6 17.6,47.6 18.6,50.8 1,55.2" fill="#111"/><polygon points="2.0,52.0 4.2,51.4 4.6,53.6 2.4,54.2" fill="#f0f0f0"/><polygon points="6.4,50.75 8.600000000000001,50.15 9.0,52.35 6.800000000000001,52.95" fill="#f0f0f0"/><polygon points="10.8,49.5 13.0,48.9 13.4,51.1 11.200000000000001,51.7" fill="#f0f0f0"/><polygon points="15.200000000000001,48.25 17.400000000000002,47.65 17.8,49.85 15.600000000000001,50.45" fill="#f0f0f0"/><polygon points="8,59 12.8,61.3 8,63.6" fill="#f2f2f2"/></g><polygon points="144.0,43.2 153.2,48.5 144.0,53.8 134.8,48.5" fill="#b4dafa"/><polygon points="134.8,48.5 144.0,53.8 144.0,64.4 134.8,59.1" fill="#90c6f5"/><polygon points="153.2,48.5 144.0,53.8 144.0,64.4 153.2,59.1" fill="#6aaae9"/><polygon points="144.0,43.2 153.2,48.5 153.2,59.1 144.0,64.4 134.8,59.1 134.8,48.5" fill="none" stroke="#2a68a8" stroke-width="1.1" stroke-linejoin="round"/><polyline points="134.8,48.5 144.0,53.8 153.2,48.5" fill="none" stroke="#2a68a8" stroke-width="0.9"/><line x1="144" y1="53.8" x2="144" y2="64.39999999999999" stroke="#2a68a8" stroke-width="0.9"/><polygon points="153.6,67 156.2,67 156.2,64.4" fill="#1a1a1a"/><path d="M181.7,52.7 C180,49.5 176,47.6 172,47.9 C167,48.3 164,50.5 164.6,53.5 C165.2,56 171,55.6 174.7,56.2 C178.5,56.9 180.5,58.8 180.1,61 C179.8,62.8 177.5,63.3 175.6,62.6" fill="none" stroke="#222" stroke-width="3.6" stroke-linecap="round"/><path d="M181.7,52.7 C180,49.5 176,47.6 172,47.9 C167,48.3 164,50.5 164.6,53.5 C165.2,56 171,55.6 174.7,56.2 C178.5,56.9 180.5,58.8 180.1,61 C179.8,62.8 177.5,63.3 175.6,62.6" fill="none" stroke="#f4f4f4" stroke-width="2" stroke-linecap="round"/><polygon points="160.2,42.2 164.6,42.6 170.4,49.2 167.6,51.4 161.4,46.6" fill="#1a1210"/><polygon points="164.6,46 168.6,49.6 167.2,50.8 164,48" fill="#e0a050"/><path d="M162.9,62.4 h7 M166.4,58.9 v7" stroke="#f39a2a" stroke-width="1.7"/><circle cx="174" cy="62.4" r="1.5" fill="#1a3a40"/><polygon points="183,67 185.6,67 185.6,64.4" fill="#1a1a1a"/><polygon points="193,46 205,44 211,49.5 210.6,61.4 198,64 192.6,58" fill="none" stroke="#24483a" stroke-width="1"/><polygon points="202.5,45.7 209.9,50.0 202.5,54.3 195.1,50.0" fill="#5fe6a2"/><polygon points="195.1,50.0 202.5,54.3 202.5,62.9 195.1,58.6" fill="#2fca7c"/><polygon points="209.9,50.0 202.5,54.3 202.5,62.9 209.9,58.6" fill="#1fa462"/><polygon points="202.5,45.7 209.9,50.0 209.9,58.6 202.5,62.9 195.1,58.6 195.1,50.0" fill="none" stroke="#107a44" stroke-width="1.1" stroke-linejoin="round"/><polyline points="195.1,50.0 202.5,54.3 209.9,50.0" fill="none" stroke="#107a44" stroke-width="0.9"/><line x1="202.5" y1="54.3" x2="202.5" y2="62.9" stroke="#107a44" stroke-width="0.9"/><circle cx="193" cy="46" r="1.25" fill="#f2f2f2"/><circle cx="205" cy="44" r="1.25" fill="#f2f2f2"/><circle cx="211" cy="49.5" r="1.25" fill="#f2f2f2"/><circle cx="210.6" cy="61.4" r="1.25" fill="#f2f2f2"/><circle cx="198" cy="64" r="1.25" fill="#f2f2f2"/><circle cx="192.6" cy="58" r="1.25" fill="#f2f2f2"/><polygon points="212.3,67 214.9,67 214.9,64.4" fill="#1a1a1a"/><circle cx="237.1" cy="56.6" r="3.4" fill="#23b566" stroke="#0f7a3e" stroke-width="0.8"/><circle cx="236.5" cy="55.8" r="1.6" fill="#5fe49a"/><circle cx="233.1" cy="60.6" r="3.4" fill="#23b566" stroke="#0f7a3e" stroke-width="0.8"/><circle cx="232.5" cy="59.8" r="1.6" fill="#5fe49a"/><circle cx="227.5" cy="60.6" r="3.4" fill="#23b566" stroke="#0f7a3e" stroke-width="0.8"/><circle cx="226.9" cy="59.8" r="1.6" fill="#5fe49a"/><circle cx="223.5" cy="56.6" r="3.4" fill="#23b566" stroke="#0f7a3e" stroke-width="0.8"/><circle cx="222.9" cy="55.8" r="1.6" fill="#5fe49a"/><circle cx="223.5" cy="51.0" r="3.4" fill="#23b566" stroke="#0f7a3e" stroke-width="0.8"/><circle cx="222.9" cy="50.2" r="1.6" fill="#5fe49a"/><circle cx="227.5" cy="47.0" r="3.4" fill="#23b566" stroke="#0f7a3e" stroke-width="0.8"/><circle cx="226.9" cy="46.2" r="1.6" fill="#5fe49a"/><circle cx="233.1" cy="47.0" r="3.4" fill="#23b566" stroke="#0f7a3e" stroke-width="0.8"/><circle cx="232.5" cy="46.2" r="1.6" fill="#5fe49a"/><circle cx="237.1" cy="51.0" r="3.4" fill="#23b566" stroke="#0f7a3e" stroke-width="0.8"/><circle cx="236.5" cy="50.2" r="1.6" fill="#5fe49a"/><rect x="228" y="51.6" width="4.8" height="4.8" fill="#e4e4e4" stroke="#8a8a8a" stroke-width="0.6"/><polygon points="240.5,67 243.1,67 243.1,64.4" fill="#1a1a1a"/><polygon points="260.2,43.1 269.6,48.5 260.2,53.9 250.8,48.5" fill="#8c9ce6"/><polygon points="250.8,48.5 260.2,53.9 260.2,64.7 250.8,59.3" fill="#93a5ec"/><polygon points="269.6,48.5 260.2,53.9 260.2,64.7 269.6,59.3" fill="#7282d4"/><polygon points="260.2,43.1 269.6,48.5 269.6,59.3 260.2,64.7 250.8,59.3 250.8,48.5" fill="none" stroke="#26307c" stroke-width="1.1" stroke-linejoin="round"/><polyline points="250.8,48.5 260.2,53.9 269.6,48.5" fill="none" stroke="#26307c" stroke-width="0.9"/><line x1="260.2" y1="53.9" x2="260.2" y2="64.7" stroke="#26307c" stroke-width="0.9"/><polyline points="250.9,54 260.2,59.2 269.5,54" fill="none" stroke="#26307c" stroke-width="0.8"/><polygon points="269.3,67 271.90000000000003,67 271.90000000000003,64.4" fill="#1a1a1a"/><rect x="275.4" y="48.4" width="26.2" height="19" fill="url(#gFloor)"/><g stroke="#6f8fd0" stroke-width="0.7" fill="none"><line x1="288.5" y1="48.4" x2="288.5" y2="67.4"/><line x1="275.4" y1="52.5" x2="301.6" y2="52.5"/><line x1="275.4" y1="57.5" x2="301.6" y2="57.5"/><line x1="275.4" y1="63.4" x2="301.6" y2="63.4"/><line x1="282" y1="48.4" x2="275.4" y2="56"/><line x1="295" y1="48.4" x2="301.6" y2="56"/><line x1="284.5" y1="48.4" x2="279" y2="67.4"/><line x1="292.5" y1="48.4" x2="298" y2="67.4"/></g><rect x="297.5" y="63.8" width="3.2" height="3.2" fill="#1a1a50"/><rect x="307" y="55.3" width="15.8" height="8" rx="1" fill="#141414"/><polygon points="322.5,58.5 329.3,55.5 329.3,64.3 322.5,61.5" fill="#141414"/><circle cx="309.8" cy="51.6" r="3.7" fill="#f2f2f2" stroke="#101820" stroke-width="1.3"/><circle cx="309.8" cy="51.6" r="1.3" fill="#1c4c7c"/><circle cx="319" cy="50.4" r="4.6" fill="#f2f2f2" stroke="#101820" stroke-width="1.4"/><circle cx="319" cy="50.4" r="1.9" fill="#3a7ab8"/><rect x="309.3" y="58.6" width="3" height="3" fill="#f0f0f0"/><polygon points="327,67 329.6,67 329.6,64.4" fill="#1a1a1a"/><circle cx="347.3" cy="50.6" r="8.6" fill="url(#gGlow)"/><path d="M347.3,43.6 C343.2,43.6 340.9,46.6 340.9,49.8 C340.9,53.4 343.9,55 344.6,58.9 L350,58.9 C350.7,55 353.7,53.4 353.7,49.8 C353.7,46.6 351.4,43.6 347.3,43.6 Z" fill="url(#gBulb)" stroke="#9c9c9c" stroke-width="0.6"/><rect x="344.8" y="58.9" width="5" height="4.6" fill="#8a8a8a"/><path d="M344.8,60.4 h5 M344.8,62 h5" stroke="#565656" stroke-width="0.6"/><polygon points="355.8,67 358.40000000000003,67 358.40000000000003,64.4" fill="#1a1a1a"/><rect x="365.9" y="44.6" width="19.6" height="19.4" rx="1.6" fill="#f1efec"/><path d="M365.9,47.4 v-1.2 a1.6,1.6 0 0 1 1.6,-1.6 h16.4 a1.6,1.6 0 0 1 1.6,1.6 v1.2 z" fill="#151515"/><polyline points="369.6,50 369.6,61 382,61" fill="none" stroke="#d63a30" stroke-width="1.7"/><polygon points="369.6,47.8 367.6,51.4 371.6,51.4" fill="#b03028"/><polygon points="384.6,61 381,59 381,63" fill="#b03028"/><path d="M376.5,55.6 L381.2,50.2 L382.6,51.6 L378,56.6 Z" fill="#9a9a9a" stroke="#555" stroke-width="0.6"/><circle cx="399.7" cy="49.3" r="6.3" fill="url(#gOr)" stroke="#8a5a10" stroke-width="0.9"/><polygon points="393.7,60.9 400.6,60.9 400.6,59.2 405,62 400.6,64.8 400.6,63.1 393.7,63.1" fill="#f2f2f2"/><text x="411.4" y="49" font-family="Liberation Sans,sans-serif" font-weight="bold" font-size="8.6" fill="#f2f2f2" text-anchor="middle">X</text><text x="411.4" y="57.6" font-family="Liberation Sans,sans-serif" font-weight="bold" font-size="8.6" fill="#f2f2f2" text-anchor="middle">Y</text><text x="411.4" y="66.2" font-family="Liberation Sans,sans-serif" font-weight="bold" font-size="8.6" fill="#f2f2f2" text-anchor="middle">Z</text><circle cx="433" cy="53.8" r="10.3" fill="url(#gSph)"/><ellipse cx="433" cy="60.6" rx="6.6" ry="2.8" fill="#9a9aec" opacity="0.85"/><ellipse cx="433" cy="46.8" rx="5.6" ry="2.6" fill="#ffffff" opacity="0.9"/><path d="M427.3,51 L431,49 L434,50.4 L438.6,48.8 L438.6,57.6 L427.3,57.6 Z" fill="#05050c"/><polygon points="462.4,47.6 453.9,62 470.9,62" fill="#8ccaf8" stroke="#1f5280" stroke-width="1.4" stroke-linejoin="round"/><circle cx="462.4" cy="47.3" r="2.3" fill="#f6f6f6" stroke="#8a8a8a" stroke-width="0.4"/><circle cx="453.7" cy="62.1" r="2.3" fill="#f6f6f6" stroke="#8a8a8a" stroke-width="0.4"/><circle cx="471.1" cy="62.1" r="2.3" fill="#f6f6f6" stroke="#8a8a8a" stroke-width="0.4"/><g fill="none" stroke="#9c9c9c" stroke-width="0.9" opacity="0.9"><path d="M482,53 C487,47 494,46 499,47"/><path d="M482.5,55 C488,50 495,49.6 501,51"/><path d="M484,56.5 h16.5 v-3 h-16.5 z" fill="#8a8a8a" stroke="none"/><path d="M489,61.5 h8" stroke-dasharray="1.5,1.5"/></g><circle cx="526.2" cy="58.3" r="5.7" fill="#f05a22"/><circle cx="524.5" cy="57" r="1.6" fill="#f88a50"/><line x1="515.6" y1="54.6" x2="509.8" y2="63.6" stroke="#f0b8a0" stroke-width="2.8" stroke-linecap="round"/><line x1="515.6" y1="54.6" x2="509.8" y2="63.6" stroke="#e0482a" stroke-width="1.5" stroke-linecap="round"/><circle cx="519" cy="49.3" r="5" fill="#8c8c8c" stroke="#141414" stroke-width="1.5"/><g fill="#161616"><polygon points="506.5,76.19999999999999 504.5,79.19999999999999 508.5,79.19999999999999"/><polygon points="506.5,87.0 504.5,84.0 508.5,84.0"/><polygon points="501.1,81.6 504.1,79.6 504.1,83.6"/><polygon points="511.9,81.6 508.9,79.6 508.9,83.6"/></g><g fill="#161616"><polygon points="519.6,76.0 517.1,79.19999999999999 522.1,79.19999999999999"/><rect x="518.8000000000001" y="78.6" width="1.6" height="5"/><polygon points="519.6,87.39999999999999 515.4,82.6 523.8000000000001,82.6"/></g><circle cx="533.2" cy="81.6" r="3.6" fill="none" stroke="#161616" stroke-width="1.8"/><polygon points="534.2,75.6 537.8000000000001,78.19999999999999 533.8000000000001,79.6" fill="#161616"/><polygon points="532.2,87.6 528.6,85.0 532.6,83.6" fill="#161616"/><rect x="543" y="77.2" width="8.2" height="10" fill="#5c5c5c" stroke="#1c1c1c" stroke-width="1.3"/><rect x="543" y="77.2" width="8" height="2" fill="#1c1c1c"/><line x1="547" y1="81" x2="547" y2="86.8" stroke="#3a3a3a" stroke-width="0.8"/></svg>
<div class="a" style="left:675.8px;top:54.4px;width:112.2px;height:19.2px;border:2.6px solid #ea3038;"></div>
<div id="white" class="a"></div>
</body></html>
